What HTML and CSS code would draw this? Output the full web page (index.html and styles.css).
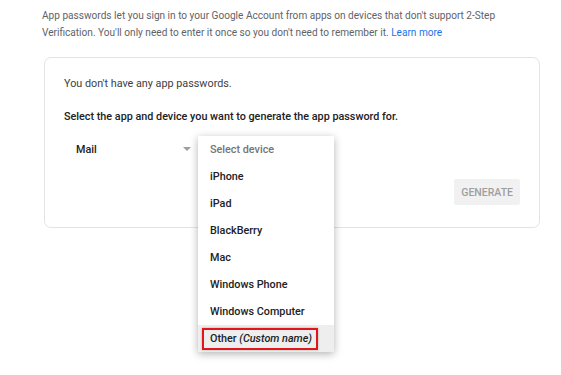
FILE: index.html
```html
<!DOCTYPE html>
<html lang="en">
<head>
  <meta charset="UTF-8">
  <title>App passwords</title>
  <link rel="stylesheet" href="styles.css">
</head>
<body>
  <p class="intro">
    App passwords let you sign in to your Google Account from apps on devices that don't support 2-Step
    Verification. You'll only need to enter it once so you don't need to remember it.
    <a href="#" class="intro__link">Learn more</a>
  </p>

  <div class="card">
    <p class="card__empty">You don't have any app passwords.</p>
    <p class="card__label">Select the app and device you want to generate the app password for.</p>

    <div class="picker">
      <div class="select">
        <span class="select__value">Mail</span>
        <span class="select__arrow"></span>
      </div>

      <ul class="menu">
        <li class="menu__item menu__item--placeholder">Select device</li>
        <li class="menu__item">iPhone</li>
        <li class="menu__item">iPad</li>
        <li class="menu__item">BlackBerry</li>
        <li class="menu__item">Mac</li>
        <li class="menu__item">Windows Phone</li>
        <li class="menu__item">Windows Computer</li>
        <li class="menu__item menu__item--active">
          <span class="menu__mark">Other <em>(Custom name)</em></span>
        </li>
      </ul>
    </div>

    <div class="card__actions">
      <button class="btn-generate" disabled>GENERATE</button>
    </div>
  </div>
</body>
</html>
```

FILE: styles.css
```css
html {
  font-family: Roboto, "Liberation Sans", Arial, sans-serif;
  font-size: 10.8px;
}

body {
  margin: 0;
  min-height: 375px;
  background-color: #fff;
  color: #202124;
}

.intro {
  margin: 0;
  padding: 7px 0 0 42px;
  width: 470px;
  font-size: 10.1px;
  line-height: 17px;
  color: #5f6368;
}

.intro__link {
  color: #1a73e8;
  text-decoration: none;
}

.card {
  margin: 16px 0 0 44px;
  width: 496px;
  box-sizing: border-box;
  padding: 18px 19px 22px;
  border: 1px solid #e3e3e3;
  border-radius: 7px;
}

.card__empty {
  margin: 0;
  line-height: 16px;
  color: #3c4043;
}

.card__label {
  margin: 17px 0 0;
  line-height: 16px;
  font-weight: 500;
  color: #202124;
}

.picker {
  position: relative;
  margin-top: 12px;
  height: 24px;
}

.select {
  display: flex;
  align-items: center;
  justify-content: space-between;
  width: 132px;
  height: 24px;
  box-sizing: border-box;
  padding: 0 5px 0 12px;
}

.select__value {
  font-weight: 500;
}

.select__arrow {
  width: 0;
  height: 0;
  border-left: 4px solid transparent;
  border-right: 4px solid transparent;
  border-top: 4px solid #9e9e9e;
}

.menu {
  position: absolute;
  left: 134px;
  top: -1px;
  width: 136px;
  margin: 0;
  padding: 0;
  list-style: none;
  background: #fff;
  box-shadow: 0 2px 8px rgba(0, 0, 0, 0.3);
  z-index: 2;
}

.menu__item {
  height: 27px;
  line-height: 27px;
  padding-left: 12px;
  font-weight: 500;
  color: #202124;
  white-space: nowrap;
}

.menu__item--placeholder {
  color: #757575;
}

.menu__item--active {
  display: flex;
  align-items: center;
  padding-left: 4px;
  background: #eeeeee;
}

.menu__mark {
  display: inline-block;
  line-height: 18px;
  padding: 0 4px 0 6px;
  border: 2px solid #e0161b;
  box-shadow: 0 0 2px rgba(0, 0, 0, 0.3);
}

.menu__mark em {
  font-weight: 500;
}

.card__actions {
  display: flex;
  justify-content: flex-end;
  margin-top: 18px;
}

.btn-generate {
  height: 26px;
  padding: 0 7px;
  border: 0;
  border-radius: 2px;
  background: #f1f1f1;
  color: #9e9e9e;
  font-family: inherit;
  font-size: 10.5px;
  font-weight: 500;
}
```
